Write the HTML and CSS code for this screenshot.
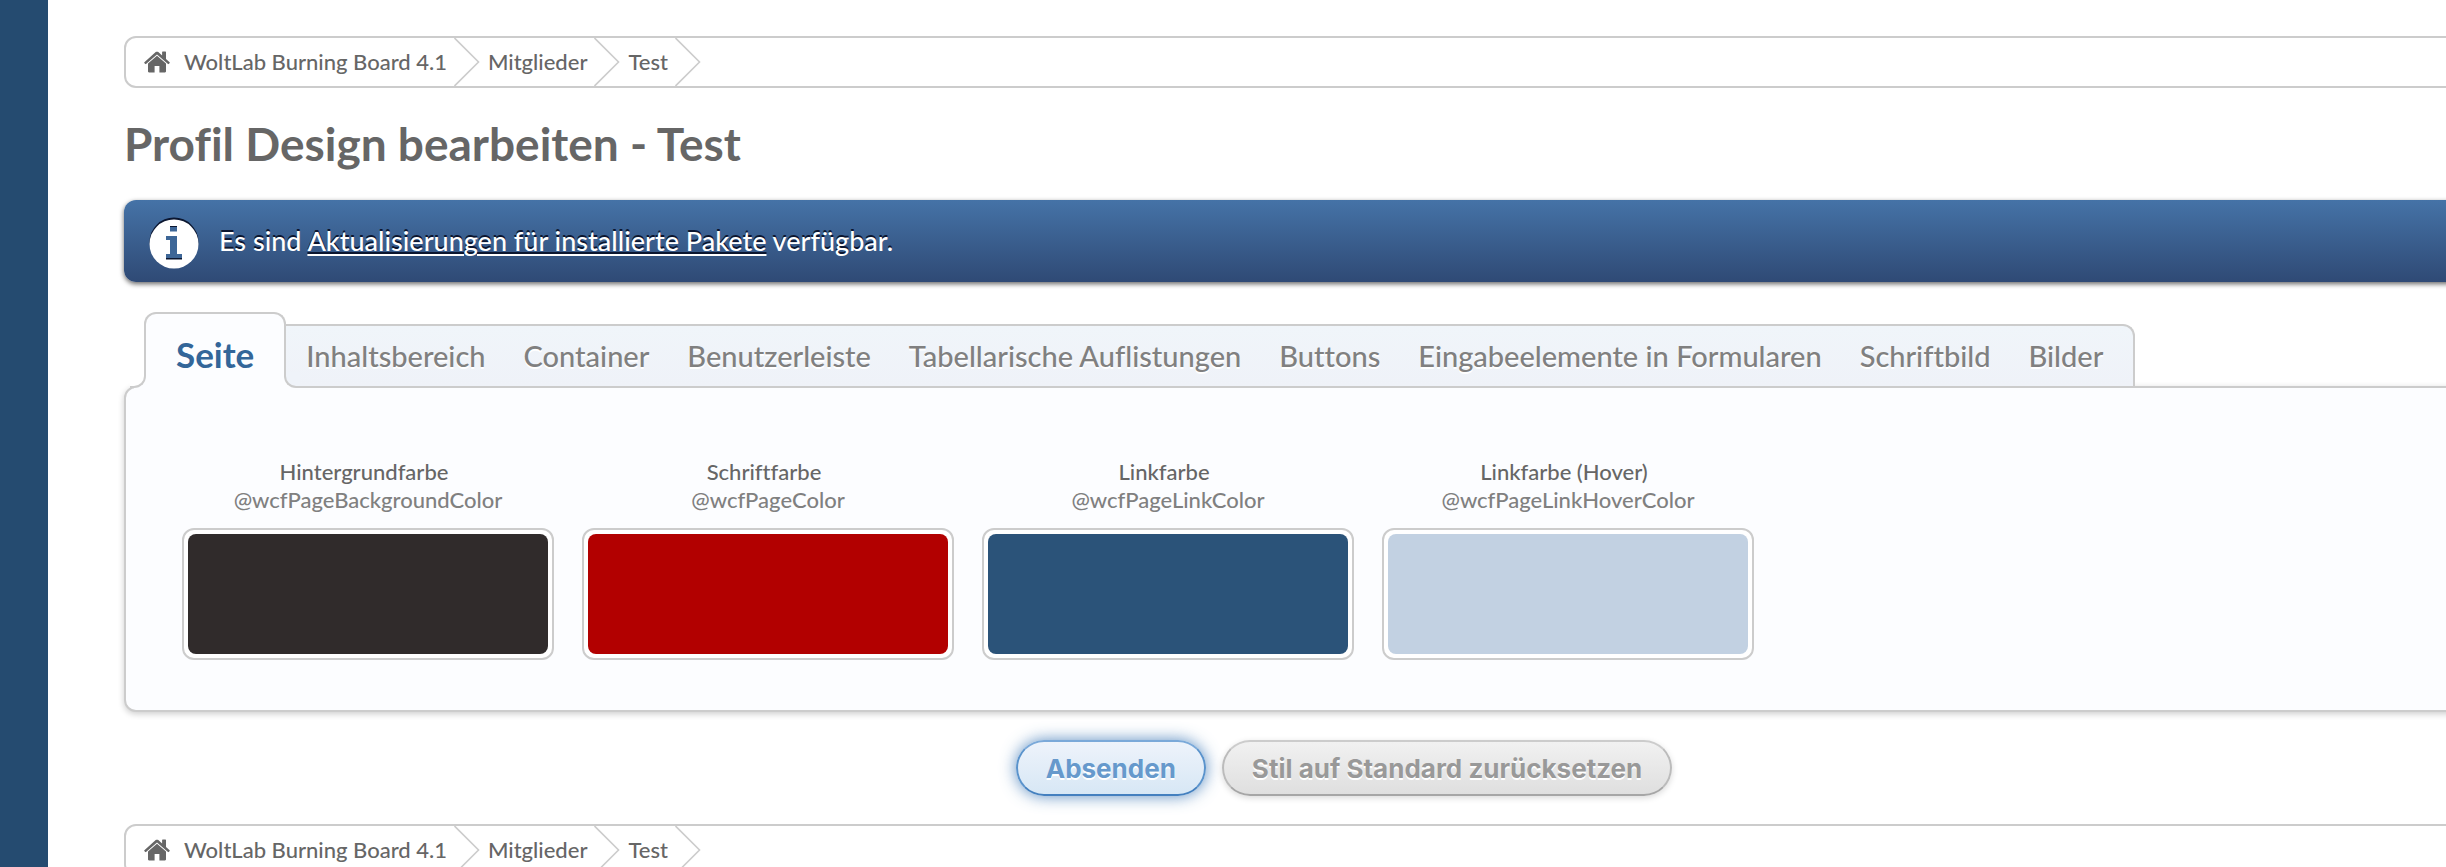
FILE: index.html
```html
<!DOCTYPE html>
<html lang="de">
<head>
<meta charset="utf-8">
<title>Profil Design bearbeiten - Test</title>
<link rel="stylesheet" href="styles.css">
</head>
<body>
<svg class="defs" width="0" height="0" aria-hidden="true">
  <symbol id="home" viewBox="0 0 26 22">
    <path fill="currentColor" d="M13 4.8 22 12.4V20.3c0 .7-.4 1.1-1 1.1h-5.6V15h-4.8v6.4H5c-.6 0-1-.4-1-1.1v-7.9z"/>
    <path fill="currentColor" d="M25.6 11.2 22 8V1.1c0-.4-.2-.6-.6-.6h-2.700c-.4 0-.6.200-.6.600v3.400L14.300 1.100c-.7-.6-1.900-.6-2.600 0L.4 11.200c-.2.200-.3.500-.1.700l1 1.100c.2.200.5.200.7 0L13 3.400l11 9.600c.2.200.5.200.7 0l1-1.100c.2-.2.100-.5-.1-.7z"/>
  </symbol>
  <symbol id="arrow" viewBox="0 0 26 48">
    <path fill="none" stroke="#ccc" stroke-width="1.600" d="M.5 0 24.500 24 .5 48"/>
  </symbol>
</svg>
<div class="page">
  <div class="edge"></div>
  <main class="main">
    <nav class="crumbs" aria-label="Navigationspfad">
      <a class="crumb" href="#"><svg class="home"><use href="#home"/></svg><span>WoltLab Burning Board 4.1</span></a>
      <svg class="arrow"><use href="#arrow"/></svg>
      <a class="crumb" href="#">Mitglieder</a>
      <svg class="arrow"><use href="#arrow"/></svg>
      <a class="crumb" href="#">Test</a>
      <svg class="arrow"><use href="#arrow"/></svg>
    </nav>

    <h1 class="title">Profil Design bearbeiten - Test</h1>

    <div class="info">
      <svg class="info-icon" viewBox="0 0 50 52" aria-hidden="true">
        <circle cx="25" cy="25" r="24.500" fill="#0b1630"/>
        <circle cx="25" cy="27" r="24.500" fill="#fff"/>
        <path fill="#0b1630" d="M21 9h7v5h-7zM17 39h16v3.500H17z"/>
        <path fill="#3d6697" d="M21 10h7v4.500h-7zM17 19h11v18h5v4H17v-4h4V23h-4z"/>
      </svg>
      <p>Es sind <a href="#">Aktualisierungen für installierte Pakete</a> verfügbar.</p>
    </div>

    <nav class="tabs" aria-label="Bereiche">
      <a class="tab-active" href="#">Seite</a>
      <div class="tab-bar">
        <a href="#">Inhaltsbereich</a>
        <a href="#">Container</a>
        <a href="#">Benutzerleiste</a>
        <a href="#">Tabellarische Auflistungen</a>
        <a href="#">Buttons</a>
        <a href="#">Eingabeelemente in Formularen</a>
        <a href="#">Schriftbild</a>
        <a href="#">Bilder</a>
      </div>
    </nav>

    <section class="panel">
      <div class="color">
        <div class="name">Hintergrundfarbe</div>
        <div class="variable">@wcfPageBackgroundColor</div>
        <button class="swatch" type="button" aria-label="Hintergrundfarbe"><span class="fill background"></span></button>
      </div>
      <div class="color">
        <div class="name">Schriftfarbe</div>
        <div class="variable">@wcfPageColor</div>
        <button class="swatch" type="button" aria-label="Schriftfarbe"><span class="fill text"></span></button>
      </div>
      <div class="color">
        <div class="name">Linkfarbe</div>
        <div class="variable">@wcfPageLinkColor</div>
        <button class="swatch" type="button" aria-label="Linkfarbe"><span class="fill link"></span></button>
      </div>
      <div class="color">
        <div class="name">Linkfarbe (Hover)</div>
        <div class="variable">@wcfPageLinkHoverColor</div>
        <button class="swatch" type="button" aria-label="Linkfarbe (Hover)"><span class="fill hover"></span></button>
      </div>
    </section>

    <div class="actions">
      <button class="button primary" type="submit">Absenden</button>
      <button class="button" type="button">Stil auf Standard zurücksetzen</button>
    </div>

    <nav class="crumbs" aria-label="Navigationspfad unten">
      <a class="crumb" href="#"><svg class="home"><use href="#home"/></svg><span>WoltLab Burning Board 4.1</span></a>
      <svg class="arrow"><use href="#arrow"/></svg>
      <a class="crumb" href="#">Mitglieder</a>
      <svg class="arrow"><use href="#arrow"/></svg>
      <a class="crumb" href="#">Test</a>
      <svg class="arrow"><use href="#arrow"/></svg>
    </nav>
  </main>
</div>
</body>
</html>
```
FILE: styles.css
```css
* {
  box-sizing: border-box;
}

body {
  margin: 0;
  background: #fff;
  color: #666;
  font: 500 22px/28px Lato, "Open Sans", sans-serif;
  font-variant-ligatures: none;
}

a {
  color: inherit;
  text-decoration: none;
}

p {
  margin: 0;
}

.defs {
  display: block;
}

.page {
  display: flex;
  height: 100vh;
  overflow: hidden;
}

.edge {
  flex: none;
  width: 48px;
  background: #254b70;
}

/* The content runs on past the right edge of the window. */
.main {
  flex: 1;
  min-width: 0;
  margin-right: -118px;
  padding: 36px 0 0 76px;
}

.crumbs {
  display: flex;
  align-items: center;
  height: 52px;
  padding-left: 18px;
  border: 2px solid #ccc;
  border-radius: 12px;
}

.crumb {
  display: flex;
  align-items: center;
  gap: 14px;
}

.home {
  width: 26px;
  height: 22px;
}

.arrow {
  width: 26px;
  height: 48px;
  margin: 0 8px 0 7px;
}

.title {
  margin: 26px 0;
  font-size: 46px;
  line-height: 60px;
  font-weight: 700;
}

.info {
  display: flex;
  align-items: center;
  gap: 20px;
  height: 82px;
  padding-left: 25px;
  border-radius: 12px;
  background: linear-gradient(#4573a7, #2f4a75);
  box-shadow: 0 2px 5px rgba(0, 0, 0, .6);
  color: #fff;
  font-size: 27px;
  text-shadow: 0 -2px 0 #0b1630;
}

.info-icon {
  width: 50px;
  height: 52px;
  margin-top: 4px;
}

.info a {
  text-decoration: underline;
  text-decoration-thickness: 2px;
  text-underline-offset: 3px;
}

.tabs {
  position: relative;
  z-index: 1;
  display: flex;
  align-items: flex-end;
  margin: 30px 0 -2px 20px;
}

.tab-active {
  position: relative;
  z-index: 1;
  height: 76px;
  padding: 22px 30px 0;
  border: 2px solid #ccc;
  border-bottom: 0;
  border-radius: 12px 12px 0 0;
  background: #fcfdff;
  color: #369;
  font-size: 35px;
  line-height: 36px;
  font-weight: 700;
}

/* Concave feet that join the active tab to the panel border. */
.tab-active::before,
.tab-active::after {
  content: "";
  position: absolute;
  bottom: 0;
  width: 14px;
  height: 14px;
  border: 0 solid #ccc;
  border-bottom-width: 2px;
}

.tab-active::before {
  right: 100%;
  border-right-width: 2px;
  border-bottom-right-radius: 12px;
  background: #fff;
  box-shadow: 4px 4px 0 #fcfdff;
}

.tab-active::after {
  left: 100%;
  border-left-width: 2px;
  border-bottom-left-radius: 12px;
  background: #eff3f9;
  box-shadow: -4px 4px 0 #fcfdff;
}

.tab-bar {
  display: flex;
  gap: 38px;
  height: 62px;
  margin-bottom: 2px;
  padding: 12px 30px 0 20px;
  border: 2px solid #ccc;
  border-width: 2px 2px 0 0;
  border-radius: 0 12px 0 0;
  background: linear-gradient(#f0f5fa, #eff2f8);
  color: #808080;
  font-size: 29px;
  line-height: 36px;
  text-shadow: 0 2px 0 #fff;
}

.panel {
  display: flex;
  gap: 28px;
  padding: 70px 56px 50px;
  border: 2px solid #ccc;
  border-radius: 12px;
  background: #fcfdff;
  box-shadow: 0 2px 6px rgba(0, 0, 0, .2);
}

.color {
  width: 372px;
  text-align: center;
}

.name {
  padding-right: 8px;
}

.variable {
  margin-bottom: 14px;
  color: #808080;
}

.swatch {
  display: block;
  width: 100%;
  padding: 4px;
  border: 2px solid #ccc;
  border-radius: 12px;
  background: #fff;
}

.fill {
  display: block;
  height: 120px;
  border-radius: 8px;
}

.background {
  background: #302b2b;
}

.text {
  background: #b20000;
}

.link {
  background: #2b5379;
}

.hover {
  background: #c2d1e2;
}

.actions {
  display: flex;
  justify-content: center;
  gap: 16px;
  padding: 28px 0;
}

.button {
  height: 56px;
  padding: 2px 28px 0;
  border: 2px solid;
  border-color: #ccc #bbb #a6a6a6;
  border-radius: 28px;
  background: linear-gradient(#f1f1f1, #dfdfdf);
  box-shadow: 0 2px 6px rgba(0, 0, 0, .15);
  color: #999;
  font: 700 26px/32px Inter, "Liberation Sans", sans-serif;
  text-shadow: 0 2px 0 #fff;
}

.primary {
  border-color: #7ba9d9 #5a93cc #4480bf;
  background: linear-gradient(#eef3fb, #d7e7f5);
  box-shadow: 0 0 16px rgba(51, 112, 178, .8);
  color: #69c;
}
```
